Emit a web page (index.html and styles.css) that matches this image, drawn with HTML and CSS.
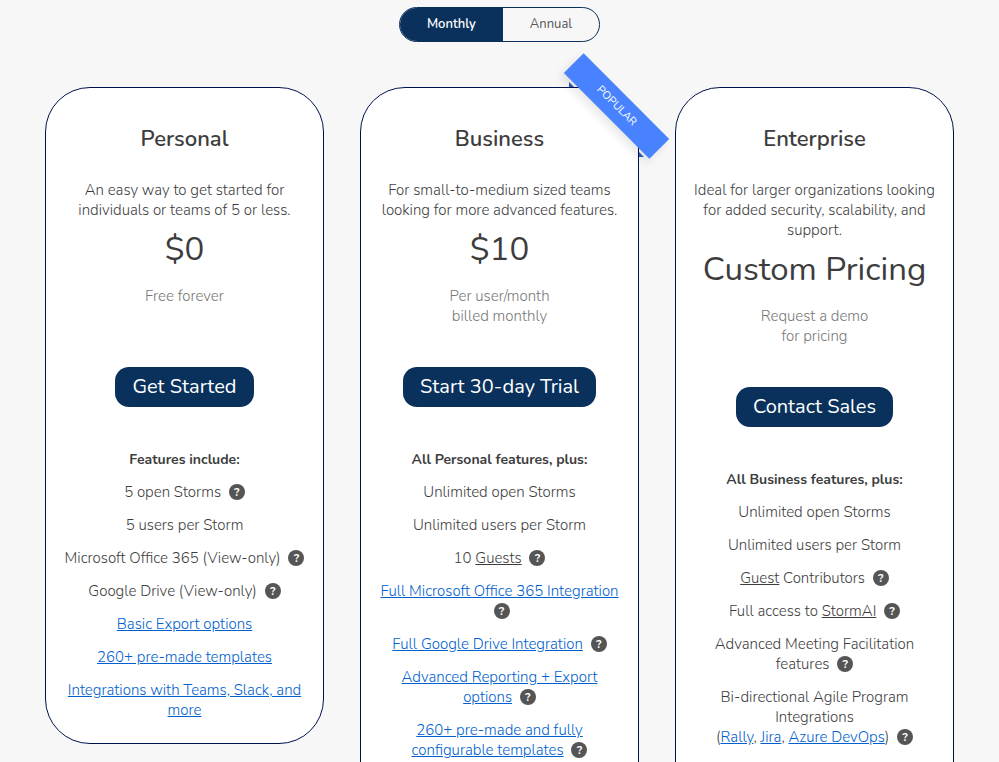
FILE: index.html
```html
<!DOCTYPE html>
<html lang="en">
<head>
    <meta charset="UTF-8">
    <meta name="viewport" content="width=device-width, initial-scale=1.0">
    <title>Pricing</title>
    <link rel="stylesheet" href="styles.css">
</head>
<body>
    <div class="toggle">
        <button type="button" class="toggle-btn active">Monthly</button>
        <button type="button" class="toggle-btn">Annual</button>
    </div>

    <main class="plans">
        <section class="plan">
            <h2>Personal</h2>
            <p>An easy way to get started for individuals or teams of 5 or less.</p>
            <div class="price">$0</div>
            <p class="terms">Free forever</p>
            <a href="#" class="cta">Get Started</a>
            <h3>Features include:</h3>
            <ul class="features">
                <li>5 open Storms <button type="button" class="help">?</button></li>
                <li>5 users per Storm</li>
                <li>Microsoft Office 365 (View-only) <button type="button" class="help">?</button></li>
                <li>Google Drive (View-only) <button type="button" class="help">?</button></li>
                <li><a href="#">Basic Export options</a></li>
                <li><a href="#">260+ pre-made templates</a></li>
                <li><a href="#">Integrations with Teams, Slack, and more</a></li>
            </ul>
        </section>

        <section class="plan plan-long">
            <div class="ribbon"><span>POPULAR</span></div>
            <h2>Business</h2>
            <p>For small-to-medium sized teams looking for more advanced features.</p>
            <div class="price">$10</div>
            <p class="terms">Per user/month<br>billed monthly</p>
            <a href="#" class="cta">Start 30-day Trial</a>
            <h3>All Personal features, plus:</h3>
            <ul class="features">
                <li>Unlimited open Storms</li>
                <li>Unlimited users per Storm</li>
                <li>10 <a href="#" class="plain">Guests</a> <button type="button" class="help">?</button></li>
                <li><a href="#">Full Microsoft Office 365 Integration</a> <button type="button" class="help">?</button></li>
                <li><a href="#">Full Google Drive Integration</a> <button type="button" class="help">?</button></li>
                <li><a href="#">Advanced Reporting + Export options</a> <button type="button" class="help">?</button></li>
                <li><a href="#">260+ pre-made and fully configurable templates</a> <button type="button" class="help">?</button></li>
            </ul>
        </section>

        <section class="plan plan-long">
            <h2>Enterprise</h2>
            <p>Ideal for larger organizations looking for added security, scalability, and support.</p>
            <div class="price">Custom Pricing</div>
            <p class="terms">Request a demo<br>for pricing</p>
            <a href="#" class="cta">Contact Sales</a>
            <h3>All Business features, plus:</h3>
            <ul class="features">
                <li>Unlimited open Storms</li>
                <li>Unlimited users per Storm</li>
                <li><a href="#" class="plain">Guest</a> Contributors <button type="button" class="help">?</button></li>
                <li>Full access to <a href="#" class="plain">StormAI</a> <button type="button" class="help">?</button></li>
                <li>Advanced Meeting Facilitation features <button type="button" class="help">?</button></li>
                <li>Bi-directional Agile Program Integrations<br>(<a href="#">Rally</a>, <a href="#">Jira</a>, <a href="#">Azure DevOps</a>) <button type="button" class="help">?</button></li>
            </ul>
        </section>
    </main>
</body>
</html>
```
FILE: styles.css
```css
* {
    box-sizing: border-box;
}
body {
    margin: 0;
    padding: 7px 45px 40px;
    background-color: #f7f7f7;
    color: #3d3d3d;
    font-family: Nunito, "Open Sans", sans-serif;
    font-size: 15px;
    font-weight: 300;
    line-height: 20px;
}
button {
    font-family: inherit;
    cursor: pointer;
}
.toggle {
    display: flex;
    width: fit-content;
    height: 35px;
    margin: 0 auto 45px;
    border: 1px solid #0a315c;
    border-radius: 18px;
    overflow: hidden;
}
.toggle-btn {
    padding: 0 27px 2px;
    border: 0;
    background: none;
    color: #555;
    font-size: 13px;
}
.toggle-btn.active {
    background-color: #0a315c;
    color: #fff;
    font-weight: 600;
}
.plans {
    display: grid;
    grid-template-columns: repeat(3, 1fr);
    gap: 36px;
    align-items: start;
}
.plan {
    position: relative;
    padding: 36px 17px 23px;
    border: 1px solid #00124d;
    border-radius: 45px;
    background-color: #fff;
    text-align: center;
}
.plan-long {
    padding-bottom: 100px;
}
h2 {
    margin: 0 0 26px;
    font-size: 22px;
    font-weight: 600;
    line-height: 30px;
}
p {
    margin: 0;
}
.price {
    margin-bottom: 6px;
    font-size: 33px;
    font-weight: 400;
    line-height: 60px;
}
.terms {
    min-height: 40px;
    margin-bottom: 41px;
    color: #777;
}
.cta {
    display: inline-block;
    padding: 0 17px;
    border-radius: 14px;
    background-color: #0a315c;
    color: #fff;
    font-size: 20px;
    font-weight: 400;
    line-height: 40px;
    text-decoration: none;
    vertical-align: top;
}
h3 {
    margin: 43px 0 12px;
    font-size: 14px;
    font-weight: 700;
    line-height: 20px;
}
.features {
    margin: 0;
    padding: 0;
    list-style: none;
}
.features li {
    margin-bottom: 13px;
}
.features li:last-child {
    margin-bottom: 0;
}
.features a {
    color: #0061ce;
}
.features .plain {
    color: inherit;
}
.help {
    width: 16px;
    height: 16px;
    margin: 2px 0 2px 4px;
    padding: 0;
    border: 0;
    border-radius: 50%;
    background-color: #555;
    color: #fff;
    font-size: 12px;
    font-weight: 700;
    line-height: 16px;
    vertical-align: top;
}

/* ribbon over the card corner */
.ribbon {
    position: absolute;
    top: -6px;
    right: -6px;
    width: 75px;
    height: 75px;
}
.ribbon span {
    position: absolute;
    top: 10px;
    left: -13px;
    width: 121px;
    background-color: #4882ff;
    box-shadow: 0 5px 10px rgba(0, 0, 0, 0.1);
    color: #fff;
    font-size: 11px;
    font-weight: 400;
    line-height: 28px;
    transform: rotate(45deg);
}
.ribbon::before,
.ribbon::after {
    content: "";
    position: absolute;
    width: 5px;
    height: 5px;
    background-color: #2b5cb3;
    clip-path: polygon(0 0, 100% 100%, 0 100%);
}
.ribbon::before {
    top: 0;
    left: 0;
}
.ribbon::after {
    right: 0;
    bottom: 0;
}

@media (max-width: 800px) {
    .plans {
        grid-template-columns: 1fr;
    }
}
```
